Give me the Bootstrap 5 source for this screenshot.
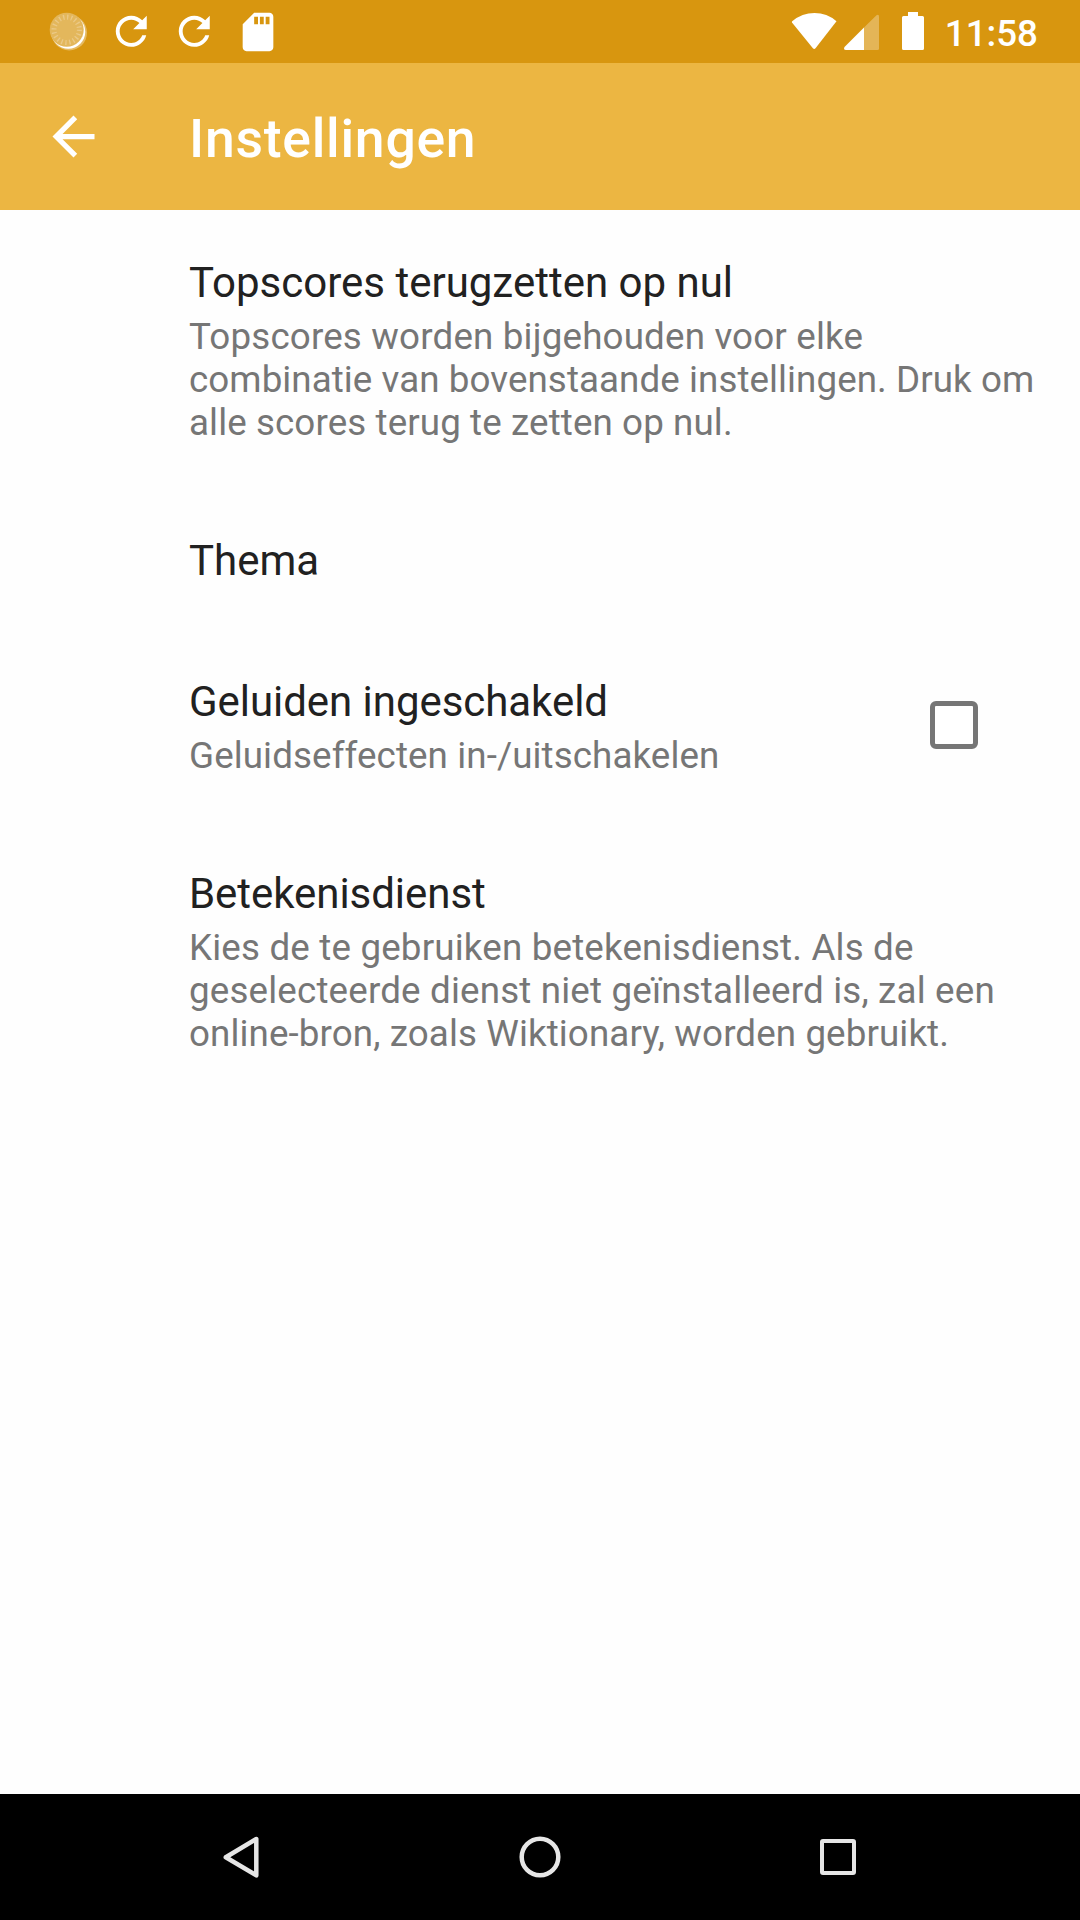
<!DOCTYPE html>
<html lang="nl">
<head>
<meta charset="utf-8">
<meta name="viewport" content="width=device-width, initial-scale=1">
<title>Instellingen</title>
<link href="https://cdn.jsdelivr.net/npm/bootstrap@5.3.0/dist/css/bootstrap.min.css" rel="stylesheet">
<style>
body{font-family:Roboto,"Noto Sans",sans-serif;background:#fefefe;height:1920px;overflow:hidden}
svg{display:block;flex:none}
.status-bar{height:63px;background:#d8960f;padding:0 42px 0 37px}
.slot{width:63px}
.clock{font-size:36.75px;font-weight:500;line-height:43px;margin:3px 0 0 21px}
.app-bar{height:147px;background:#ecb642;padding-left:42px}
.app-title{font-size:53.5px;font-weight:500;line-height:62px;letter-spacing:.75px;margin:4px 0 0 84px}
.pref{padding:44px 32px 40px 189px}
.pref-title{font-size:42px;line-height:57px;color:#212121}
.title-snug{letter-spacing:-.05px}
.pref-sum{font-size:36.75px;line-height:43px;color:#767676;margin:4px 0}
.wide-a{letter-spacing:.07px}
.wide-b{letter-spacing:.1px}
.wide-c{letter-spacing:.17px}
.pref-check{padding-right:102px}
.pref-check .form-check-input{width:48px;height:48px;border:5px solid #767676;border-radius:6px;margin:0 0 4px}
.nav-keys{height:126px}
</style>
<script src="https://cdn.jsdelivr.net/npm/bootstrap@5.3.0/dist/js/bootstrap.bundle.min.js"></script>
</head>
<body class="d-flex flex-column">
<div class="status-bar d-flex align-items-center justify-content-between text-white">
  <div class="d-flex align-items-center">
    <div class="slot d-flex justify-content-center"><svg width="40" height="40" viewBox="0 0 40 40"><circle cx="20.200" cy="20.600" r="17.800" fill="#fff" opacity=".35"/><circle cx="19.300" cy="19.700" r="17" fill="#fff"/><circle cx="17.700" cy="17.800" r="17" fill="#e3b75c"/><circle cx="17.700" cy="17.800" r="12.700" fill="none" stroke="#ebc987" stroke-width="5" stroke-dasharray="1.300 2.690"/></svg></div>
    <div class="slot d-flex justify-content-center"><svg width="46.5" height="46.5" viewBox="0 0 24 24" fill="#fff"><path d="M17.65 6.35C16.2 4.9 14.21 4 12 4c-4.42 0-7.99 3.58-7.99 8s3.57 8 7.99 8c3.73 0 6.84-2.55 7.73-6h-2.08c-.82 2.33-3.04 4-5.65 4-3.31 0-6-2.69-6-6s2.69-6 6-6c1.66 0 3.14.69 4.22 1.78L13 11h7V4l-2.35 2.35z"/></svg></div>
    <div class="slot d-flex justify-content-center"><svg width="46.5" height="46.5" viewBox="0 0 24 24" fill="#fff"><path d="M17.65 6.35C16.2 4.9 14.21 4 12 4c-4.42 0-7.99 3.58-7.99 8s3.57 8 7.99 8c3.73 0 6.84-2.55 7.73-6h-2.08c-.82 2.33-3.04 4-5.65 4-3.31 0-6-2.69-6-6s2.69-6 6-6c1.66 0 3.14.69 4.22 1.78L13 11h7V4l-2.35 2.35z"/></svg></div>
    <div class="slot d-flex justify-content-center"><svg width="46" height="46" viewBox="0 0 24 24" fill="#fff"><path d="M18 2h-8L4.02 8 4 20c0 1.1.9 2 2 2h12c1.1 0 2-.9 2-2V4c0-1.1-.9-2-2-2zm-6 6h-2V4h2v4zm3 0h-2V4h2v4zm3 0h-2V4h2v4z"/></svg></div>
  </div>
  <div class="d-flex align-items-center">
    <svg width="134" height="63" viewBox="0 0 134 63" fill="#fff">
      <path d="M2.2 21.2Q12 13 24.500 13T46.500 21.200L25.500 48.300Q24.200 49.700 22.900 48.300L2 22.600Q1.500 21.800 2.200 21.200z"/>
      <path opacity=".3" d="M74 27.500 86.500 15.300Q89 14 89 16.500V48.500Q89 50 87.500 50H74z"/>
      <path d="M74 27.500V50H56Q53 50 54.500 47z"/>
      <path d="M118 12h10v4h4.500Q134 16 134 17.500V48.500Q134 50 132.500 50h-19Q112 50 112 48.500v-31Q112 16 113.500 16h4.500z"/>
    </svg>
    <div class="clock">11:58</div>
  </div>
</div>
<nav class="app-bar d-flex align-items-center text-white">
  <svg width="63" height="63" viewBox="0 0 24 24" fill="#fff"><path d="M20 11H7.830l5.590-5.590L12 4l-8 8 8 8 1.410-1.410L7.830 13H20v-2z"/></svg>
  <h1 class="app-title">Instellingen</h1>
</nav>
<main class="flex-grow-1">
  <div class="pref">
    <div class="pref-title">Topscores terugzetten op nul</div>
    <div class="pref-sum"><span class="wide-c">Topscores worden bijgehouden voor elke</span><br><span class="wide-a">combinatie van bovenstaande instellingen. Druk om</span><br><span class="wide-b">alle scores terug te zetten op nul.</span></div>
  </div>
  <div class="pref"><div class="pref-title">Thema</div></div>
  <div class="pref pref-check d-flex justify-content-between align-items-center">
    <div>
      <div class="pref-title title-snug">Geluiden ingeschakeld</div>
      <div class="pref-sum wide-b">Geluidseffecten in-/uitschakelen</div>
    </div>
    <input class="form-check-input" type="checkbox" aria-label="Geluiden ingeschakeld">
  </div>
  <div class="pref">
    <div class="pref-title title-snug">Betekenisdienst</div>
    <div class="pref-sum"><span class="wide-c">Kies de te gebruiken betekenisdienst. Als de</span><br><span class="wide-c">geselecteerde dienst niet geïnstalleerd is, zal een</span><br><span class="wide-b">online-bron, zoals Wiktionary, worden gebruikt.</span></div>
  </div>
</main>
<footer class="nav-keys bg-black d-flex justify-content-center">
  <svg width="298" height="126" viewBox="0 0 298 126" fill="none" stroke="#e6e6e6" stroke-width="4.500" stroke-linejoin="round"><path d="M132.800 63.200 163.300 45V81.400z"/></svg>
  <svg width="298" height="126" viewBox="0 0 298 126" fill="none" stroke="#e6e6e6" stroke-width="4.500"><circle cx="149" cy="63" r="18.300"/></svg>
  <svg width="298" height="126" viewBox="0 0 298 126" fill="none" stroke="#e6e6e6" stroke-width="4"><rect x="133" y="47" width="32" height="32" rx="1"/></svg>
</footer>
</body>
</html>
